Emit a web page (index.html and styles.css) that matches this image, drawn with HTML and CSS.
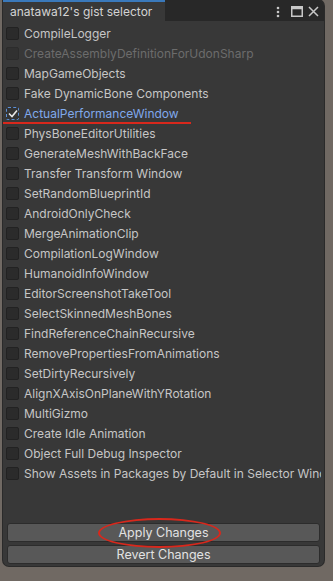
FILE: index.html
```html
<!DOCTYPE html>
<html lang="en">
<head>
    <meta charset="UTF-8">
    <title>anatawa12's gist selector</title>
    <link rel="stylesheet" href="styles.css">
</head>
<body>
    <div class="window">
        <div class="titlebar">
            <div class="tab">anatawa12's gist selector</div>
            <div class="actions">
                <svg class="menu" width="4" height="12" viewBox="0 0 4 12"><circle cx="2" cy="2" r="1.3" fill="#c8c8c8"/><circle cx="2" cy="6" r="1.3" fill="#c8c8c8"/><circle cx="2" cy="10" r="1.3" fill="#c8c8c8"/></svg>
                <svg class="maximize" width="12" height="11" viewBox="0 0 12 11"><rect x="0.75" y="0.75" width="10.5" height="9.5" fill="none" stroke="#c8c8c8" stroke-width="1.5"/><rect x="0.75" y="0.75" width="10.5" height="2.5" fill="#c8c8c8"/></svg>
                <svg width="11" height="11" viewBox="0 0 11 11"><path d="M1 1 L10 10 M10 1 L1 10" stroke="#c8c8c8" stroke-width="1.5"/></svg>
            </div>
        </div>

        <div class="list">
            <label class="row"><span class="box"></span>CompileLogger</label>
            <label class="row disabled"><span class="box"></span>CreateAssemblyDefinitionForUdonSharp</label>
            <label class="row"><span class="box"></span>MapGameObjects</label>
            <label class="row"><span class="box"></span>Fake DynamicBone Components</label>
            <label class="row selected"><span class="box checked">
                <svg width="10" height="9" viewBox="0 0 10 9"><path d="M1 4.5 L4 7.5 L9 1.5" fill="none" stroke="#e8e8e8" stroke-width="1.6"/></svg>
            </span>ActualPerformanceWindow</label>
            <label class="row"><span class="box"></span>PhysBoneEditorUtilities</label>
            <label class="row"><span class="box"></span>GenerateMeshWithBackFace</label>
            <label class="row"><span class="box"></span>Transfer Transform Window</label>
            <label class="row"><span class="box"></span>SetRandomBlueprintId</label>
            <label class="row"><span class="box"></span>AndroidOnlyCheck</label>
            <label class="row"><span class="box"></span>MergeAnimationClip</label>
            <label class="row"><span class="box"></span>CompilationLogWindow</label>
            <label class="row"><span class="box"></span>HumanoidInfoWindow</label>
            <label class="row"><span class="box"></span>EditorScreenshotTakeTool</label>
            <label class="row"><span class="box"></span>SelectSkinnedMeshBones</label>
            <label class="row"><span class="box"></span>FindReferenceChainRecursive</label>
            <label class="row"><span class="box"></span>RemovePropertiesFromAnimations</label>
            <label class="row"><span class="box"></span>SetDirtyRecursively</label>
            <label class="row"><span class="box"></span>AlignXAxisOnPlaneWithYRotation</label>
            <label class="row"><span class="box"></span>MultiGizmo</label>
            <label class="row"><span class="box"></span>Create Idle Animation</label>
            <label class="row"><span class="box"></span>Object Full Debug Inspector</label>
            <label class="row"><span class="box"></span>Show Assets in Packages by Default in Selector Window</label>
        </div>

        <div class="buttons">
            <button type="button">Apply Changes</button>
            <button type="button">Revert Changes</button>
        </div>

        <!-- red marks drawn over the screenshot -->
        <div class="mark-line"></div>
        <div class="mark-ellipse"></div>
    </div>
</body>
</html>
```

FILE: styles.css
```css
body {
    margin: 0;
    height: 581px;
    overflow: hidden;
    background-color: #706963;
    font-family: Inter, "Noto Sans", sans-serif;
    font-size: 12px;
}
.window {
    position: relative;
    margin: 0 9px 0 3px;
    height: 566px;
    background: #383838;
    border-radius: 0 6px 6px 6px;
    box-shadow: 0 0 0 1px #2a2a2a;
    display: flex;
    flex-direction: column;
    overflow: hidden;
}
.titlebar {
    height: 21px;
    background: #282828;
    display: flex;
    flex-shrink: 0;
}
.tab {
    width: 155px;
    padding-left: 7px;
    background: #383838;
    border-top: 2px solid #3a79bb;
    color: #d4d4d4;
    font-size: 12px;
    line-height: 19px;
}
.actions {
    margin-left: auto;
    display: flex;
    align-items: center;
    padding-right: 5px;
    padding-top: 2px;
}
.menu {
    margin-right: 11px;
}
.maximize {
    margin-right: 5px;
}
.list {
    padding: 2px 3px 0 3px;
    flex: 1;
}
.row {
    height: 20px;
    display: flex;
    align-items: center;
    gap: 5px;
    color: #c6c6c6;
    white-space: nowrap;
    overflow: hidden;
}
.box {
    width: 11px;
    height: 11px;
    flex-shrink: 0;
    background: #2b2b2b;
    border: 1px solid #222;
    border-radius: 2px;
    display: flex;
    align-items: center;
    justify-content: center;
}
.disabled {
    color: #6c6c6c;
}
.disabled .box {
    background: #313131;
    border-color: #2c2c2c;
}
.selected {
    color: #80a9ec;
}
.box.checked {
    background: #333;
    border: 1px dashed #5b8fd6;
}
.buttons {
    padding: 0 4px 2px 4px;
    display: flex;
    flex-direction: column;
    gap: 3px;
}
button {
    height: 19px;
    background: #585858;
    border: 1px solid #2c2c2c;
    border-radius: 3px;
    color: #e2e2e2;
    font-family: Inter, "Noto Sans", sans-serif;
    font-size: 12.5px;
    padding: 0;
}
.mark-line {
    position: absolute;
    left: 0;
    top: 122px;
    width: 188px;
    height: 2px;
    background: #d8281c;
}
.mark-ellipse {
    position: absolute;
    left: 95px;
    top: 518px;
    width: 119px;
    height: 26px;
    border: 2px solid #d8281c;
    border-radius: 50%;
}
```
